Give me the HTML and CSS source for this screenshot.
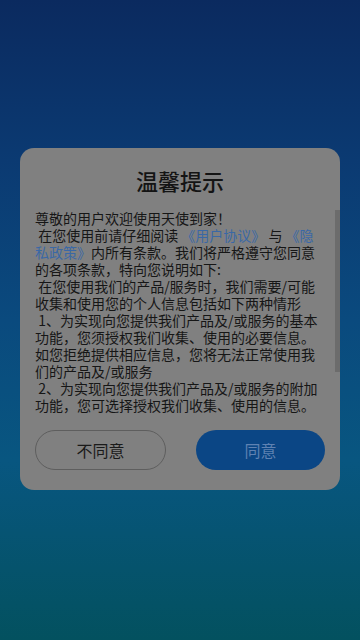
FILE: index.html
```html
<!DOCTYPE html>
<html lang="zh">
<head>
<meta charset="utf-8">
<meta name="viewport" content="width=360, initial-scale=1">
<link rel="stylesheet" href="styles.css">
</head>
<body>
<div class="screen">
  <div class="dialog">
    <h1 class="title">温馨提示</h1>
    <div class="scroll">
      <div class="content">
        <span class="line">尊敬的用户欢迎使用天使到家！</span>
        <span class="line">&nbsp;在您使用前请仔细阅读 <a class="link">《用户协议》</a> 与 <a class="link">《隐</a></span>
        <span class="line"><a class="link">私政策》</a>内所有条款。我们将严格遵守您同意</span>
        <span class="line">的各项条款，特向您说明如下:</span>
        <span class="line">&nbsp;在您使用我们的产品/服务时，我们需要/可能</span>
        <span class="line">收集和使用您的个人信息包括如下两种情形</span>
        <span class="line">&nbsp;1、为实现向您提供我们产品及/或服务的基本</span>
        <span class="line">功能，您须授权我们收集、使用的必要信息。</span>
        <span class="line">如您拒绝提供相应信息，您将无法正常使用我</span>
        <span class="line">们的产品及/或服务</span>
        <span class="line">&nbsp;2、为实现向您提供我们产品及/或服务的附加</span>
        <span class="line">功能，您可选择授权我们收集、使用的信息。</span>
        <span class="line">如您拒绝提供，您仍可以正常使用我们的产品</span>
      </div>
      <div class="scrollbar"></div>
    </div>
    <div class="actions">
      <button class="btn btn-outline">不同意</button>
      <button class="btn btn-primary">同意</button>
    </div>
  </div>
</div>
</body>
</html>
```
FILE: styles.css
```css
* { box-sizing: border-box; }
html, body {
  margin: 0;
  padding: 0;
}
body {
  width: 360px;
  height: 640px;
  overflow: hidden;
  font-family: "Noto Sans CJK SC", "Noto Sans", sans-serif;
}
.screen {
  width: 360px;
  height: 640px;
  background: linear-gradient(180deg, #0b2a5f 0%, #0b3a72 25%, #0a4a7e 50%, #085680 72%, #03515f 100%);
  padding-top: 148px;
  display: flex;
  flex-direction: column;
  align-items: center;
}
.dialog {
  width: 320px;
  height: 342px;
  background: #808080;
  border-radius: 14px;
  display: flex;
  flex-direction: column;
}
.title {
  margin: 0;
  height: 62px;
  padding-top: 16px;
  text-align: center;
  font-size: 22px;
  line-height: 32px;
  font-weight: 500;
  color: #141414;
}
.scroll {
  position: relative;
  height: 206px;
  overflow: hidden;
  padding-left: 15px;
}
.content {
  font-size: 14px;
  line-height: 17px;
  color: #161616;
}
.line {
  display: block;
  white-space: nowrap;
}
.link {
  color: #3a68a6;
}
.scrollbar {
  position: absolute;
  right: 0;
  top: 0;
  width: 5px;
  height: 162px;
  background: #6c6c6c;
}
.actions {
  display: flex;
  gap: 30px;
  padding: 14px 15px 0;
}
.btn {
  flex: 1;
  height: 40px;
  border-radius: 20px;
  font-family: "Noto Sans CJK SC", "Noto Sans", sans-serif;
  font-size: 16px;
  line-height: 20px;
  padding: 0;
}
.btn-outline {
  background: transparent;
  border: 1px solid #5e5e5e;
  color: #1a1a1a;
}
.btn-primary {
  background: #0b4685;
  border: none;
  color: #5f82b2;
}
```
